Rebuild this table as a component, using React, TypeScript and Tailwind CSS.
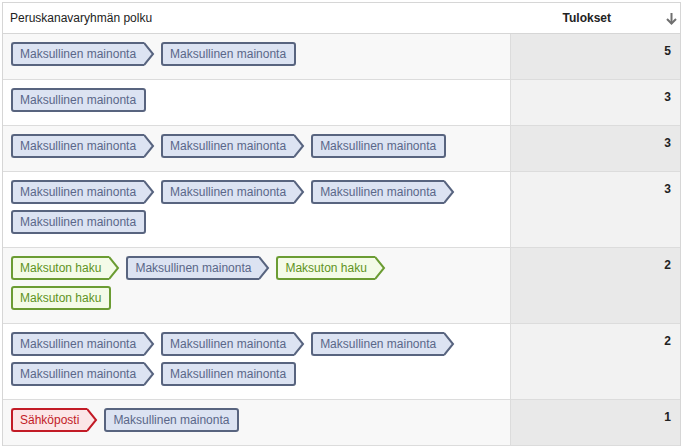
import React from "react";

type Kind = "paid" | "organic" | "email";

interface Step {
  label: string;
  kind: Kind;
}

const chipStyle: Record<Kind, { box: string; fill: string; stroke: string }> = {
  paid: { box: "border-[#58647f] bg-[#dce3f2] text-[#5a6789]", fill: "#dce3f2", stroke: "#58647f" },
  organic: { box: "border-[#6b9c33] bg-[#f4fbe8] text-[#5f9323]", fill: "#f4fbe8", stroke: "#6b9c33" },
  email: { box: "border-[#c21b26] bg-[#fbe6e7] text-[#c21b26]", fill: "#fbe6e7", stroke: "#c21b26" },
};

const P: Step = { label: "Maksullinen mainonta", kind: "paid" };
const O: Step = { label: "Maksuton haku", kind: "organic" };
const E: Step = { label: "Sähköposti", kind: "email" };

const rows: { path: Step[]; total: number }[] = [
  { path: [P, P], total: 5 },
  { path: [P], total: 3 },
  { path: [P, P, P], total: 3 },
  { path: [P, P, P, P], total: 3 },
  { path: [O, P, O, O], total: 2 },
  { path: [P, P, P, P, P], total: 2 },
  { path: [E, P], total: 1 },
];

function Chip({ step, arrow }: { step: Step; arrow: boolean }) {
  const s = chipStyle[step.kind];
  return (
    <div className="mr-[6px] mb-[6px] flex h-6 items-stretch">
      <div
        className={`flex items-center border-2 pl-[7px] pr-[8px] text-[12px] leading-none ${s.box} ${
          arrow ? "rounded-l-[3px] border-r-0" : "rounded-[3px]"
        }`}
      >
        {step.label}
      </div>
      {arrow && (
        <svg width="11" height="24" viewBox="0 0 11 24" className="block">
          <polygon points="0,0 10,12 0,24" fill={s.fill} />
          <polyline points="0,1 9,12 0,23" fill="none" stroke={s.stroke} strokeWidth="2" strokeLinejoin="miter" />
        </svg>
      )}
    </div>
  );
}

export default function App() {
  return (
    <div className="h-[447px] w-[682px] bg-white pt-[2px] pl-[2px] font-['Liberation_Sans',Arial,sans-serif] text-[12px] text-[#222]">
      <div className="w-[679px] border-t border-r border-l border-[#d6d6d6]">
        <div className="flex h-[31px] border-b border-[#d6d6d6] bg-white">
          <div className="flex w-[508px] items-center pl-[7px]">Peruskanavaryhmän polku</div>
          <div className="flex flex-1 items-center justify-end pr-[3px]">
            <span className="font-bold">Tulokset</span>
            <svg width="11" height="13" viewBox="0 0 11 13" className="ml-[55px] mt-[1px]">
              <path d="M5.5 1 V11.5" stroke="#6f6f6f" strokeWidth="2" />
              <path d="M1 7 L5.5 11.5 L10 7" fill="none" stroke="#6f6f6f" strokeWidth="2" />
            </svg>
          </div>
        </div>
        {rows.map((r, i) => (
          <div key={i} className="flex border-b border-[#dcdcdc]">
            <div
              className={`flex w-[508px] flex-wrap content-start border-r border-[#dcdcdc] pt-2 pr-[38px] pb-[7px] pl-[8px] ${
                i % 2 === 0 ? "bg-[#f8f8f8]" : "bg-white"
              }`}
            >
              {r.path.map((s, j) => (
                <Chip key={j} step={s} arrow={j < r.path.length - 1} />
              ))}
            </div>
            <div
              className={`flex-1 pt-[8px] pr-[9px] text-right font-bold ${
                i % 2 === 0 ? "bg-[#e9e9e9]" : "bg-[#f2f2f2]"
              }`}
            >
              {r.total}
            </div>
          </div>
        ))}
      </div>
    </div>
  );
}
